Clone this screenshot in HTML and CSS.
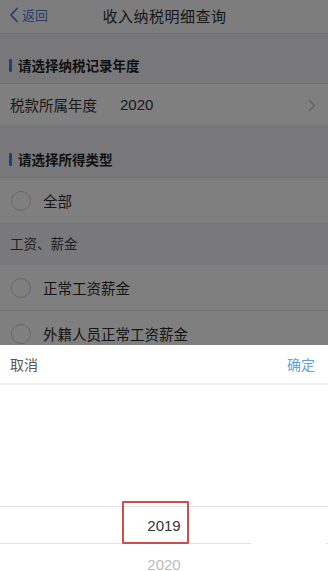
FILE: index.html
```html
<!DOCTYPE html>
<html lang="zh-CN">
<head>
<meta charset="utf-8">
<title>收入纳税明细查询</title>
<link rel="stylesheet" href="styles.css">
</head>
<body>
<div class="screen">
  <div class="page">
    <header class="navbar">
      <a class="back">
        <svg class="back-icon" width="10" height="16" viewBox="0 0 10 16"><path d="M8 1.5 L2 8 L8 14.5" fill="none" stroke="currentColor" stroke-width="1.8" stroke-linecap="round" stroke-linejoin="round"/></svg>
        <span>返回</span>
      </a>
      <h1 class="title">收入纳税明细查询</h1>
      <span></span>
    </header>

    <div class="section-title first"><span class="bar"></span>请选择纳税记录年度</div>
    <div class="cell">
      <span class="cell-label">税款所属年度</span>
      <span class="cell-value">2020</span>
      <svg class="chev" width="8" height="13" viewBox="0 0 8 13"><path d="M1.5 1.5 L6.5 6.5 L1.5 11.5" fill="none" stroke="currentColor" stroke-width="1.3" stroke-linecap="round" stroke-linejoin="round"/></svg>
    </div>

    <div class="section-title second"><span class="bar"></span>请选择所得类型</div>
    <div class="radio-row"><span class="radio"></span><span>全部</span></div>
    <div class="group-label">工资、薪金</div>
    <div class="radio-row"><span class="radio"></span><span>正常工资薪金</span></div>
    <div class="radio-row"><span class="radio"></span><span>外籍人员正常工资薪金</span></div>
  </div>

  <div class="mask"></div>

  <div class="sheet">
    <div class="toolbar">
      <span class="cancel">取消</span>
      <span class="confirm">确定</span>
    </div>
    <div class="picker">
      <div class="picker-spacer"></div>
      <div class="picker-item selected">2019</div>
      <div class="picker-item dim">2020</div>
    </div>
    <div class="highlight-box"></div>
    <div class="patch"></div>
  </div>
</div>
</body>
</html>
```

FILE: styles.css
```css
* { box-sizing: border-box; }
html, body {
  margin: 0;
  padding: 0;
}
body {
  width: 328px;
  height: 571px;
  overflow: hidden;
  font-family: "Noto Sans CJK SC", "Noto Sans", "Liberation Sans", sans-serif;
  color: #333;
  background: #fff;
}
.screen {
  position: relative;
  width: 328px;
  height: 571px;
  overflow: hidden;
}
.page {
  background: #f2f2f5;
}
.navbar {
  height: 34px;
  display: grid;
  grid-template-columns: 1fr auto 1fr;
  align-items: center;
  background: #f6f6f8;
  border-bottom: 1px solid #e2e2e4;
  padding: 0 8px 0 9px;
}
.back {
  display: flex;
  align-items: center;
  gap: 3px;
  color: #4a78d8;
  font-size: 13px;
  line-height: 1;
  padding-bottom: 4px;
}
.back-icon { display: block; }
.title {
  margin: 0;
  font-size: 15px;
  font-weight: 400;
  color: #2e2e2e;
  padding-bottom: 3px;
  letter-spacing: 0.5px;
}
.section-title {
  display: flex;
  align-items: center;
  gap: 6px;
  padding: 22px 9px 9px;
  height: 50px;
  font-size: 13.5px;
  font-weight: 700;
  color: #222;
  border-bottom: 1px solid #e0e0e2;
  background: #ececef;
}
.section-title.second {
  height: 53px;
  padding-top: 25px;
}
.bar {
  width: 3px;
  height: 13px;
  border-radius: 1px;
  background: #3a80f0;
}
.cell {
  height: 41px;
  display: flex;
  align-items: center;
  padding: 0 12px 0 10px;
  background: #fafafa;
  font-size: 14.5px;
  color: #333;
}
.cell-label { width: 110px; }
.cell-value { flex: 1; font-family: "Liberation Sans", "Noto Sans CJK SC", sans-serif; font-size: 15px; }
.chev { color: #bbb; margin-top: 1px; }
.radio-row {
  height: 46px;
  display: flex;
  align-items: center;
  gap: 12px;
  padding: 0 11px;
  background: #fafafa;
  font-size: 14.5px;
  color: #2a2a2a;
  border-bottom: 1px solid #e6e6e8;
}
.radio {
  width: 20px;
  height: 20px;
  border: 1px solid #c9c9cc;
  border-radius: 50%;
}
.group-label {
  height: 41px;
  display: flex;
  align-items: center;
  padding: 0 10px 3px;
  font-size: 13.5px;
  color: #444;
  background: #eeeef1;
}
.mask {
  position: absolute;
  inset: 0;
  background: rgba(0, 0, 0, 0.49);
}
.sheet {
  position: absolute;
  left: 0;
  right: 0;
  top: 345px;
  bottom: 0;
  background: #fff;
}
.toolbar {
  height: 40px;
  display: flex;
  justify-content: space-between;
  align-items: center;
  padding: 0 13px 0 10px;
  font-size: 14px;
  border-bottom: 2px solid #eeeeee;
}
.cancel { color: #555; }
.confirm { color: #64a0d2; }
.picker {
  display: flex;
  flex-direction: column;
}
.picker-spacer { height: 121px; }
.picker-item {
  height: 38px;
  display: flex;
  align-items: center;
  justify-content: center;
  font-family: "Liberation Sans", "Noto Sans", sans-serif;
  font-size: 15px;
}
.picker-item.selected {
  color: #333;
  border-top: 1px solid #e2e2e2;
  border-bottom: 1px solid #e2e2e2;
}
.picker-item.dim {
  color: #bbb;
  padding-top: 2px;
}
.highlight-box {
  position: absolute;
  left: 122px;
  top: 156px;
  width: 67px;
  height: 43px;
  border: 2px solid #c8504c;
  border-radius: 1px;
}
.patch {
  position: absolute;
  left: 251px;
  top: 181px;
  width: 75px;
  height: 45px;
  background: #fff;
}
```
